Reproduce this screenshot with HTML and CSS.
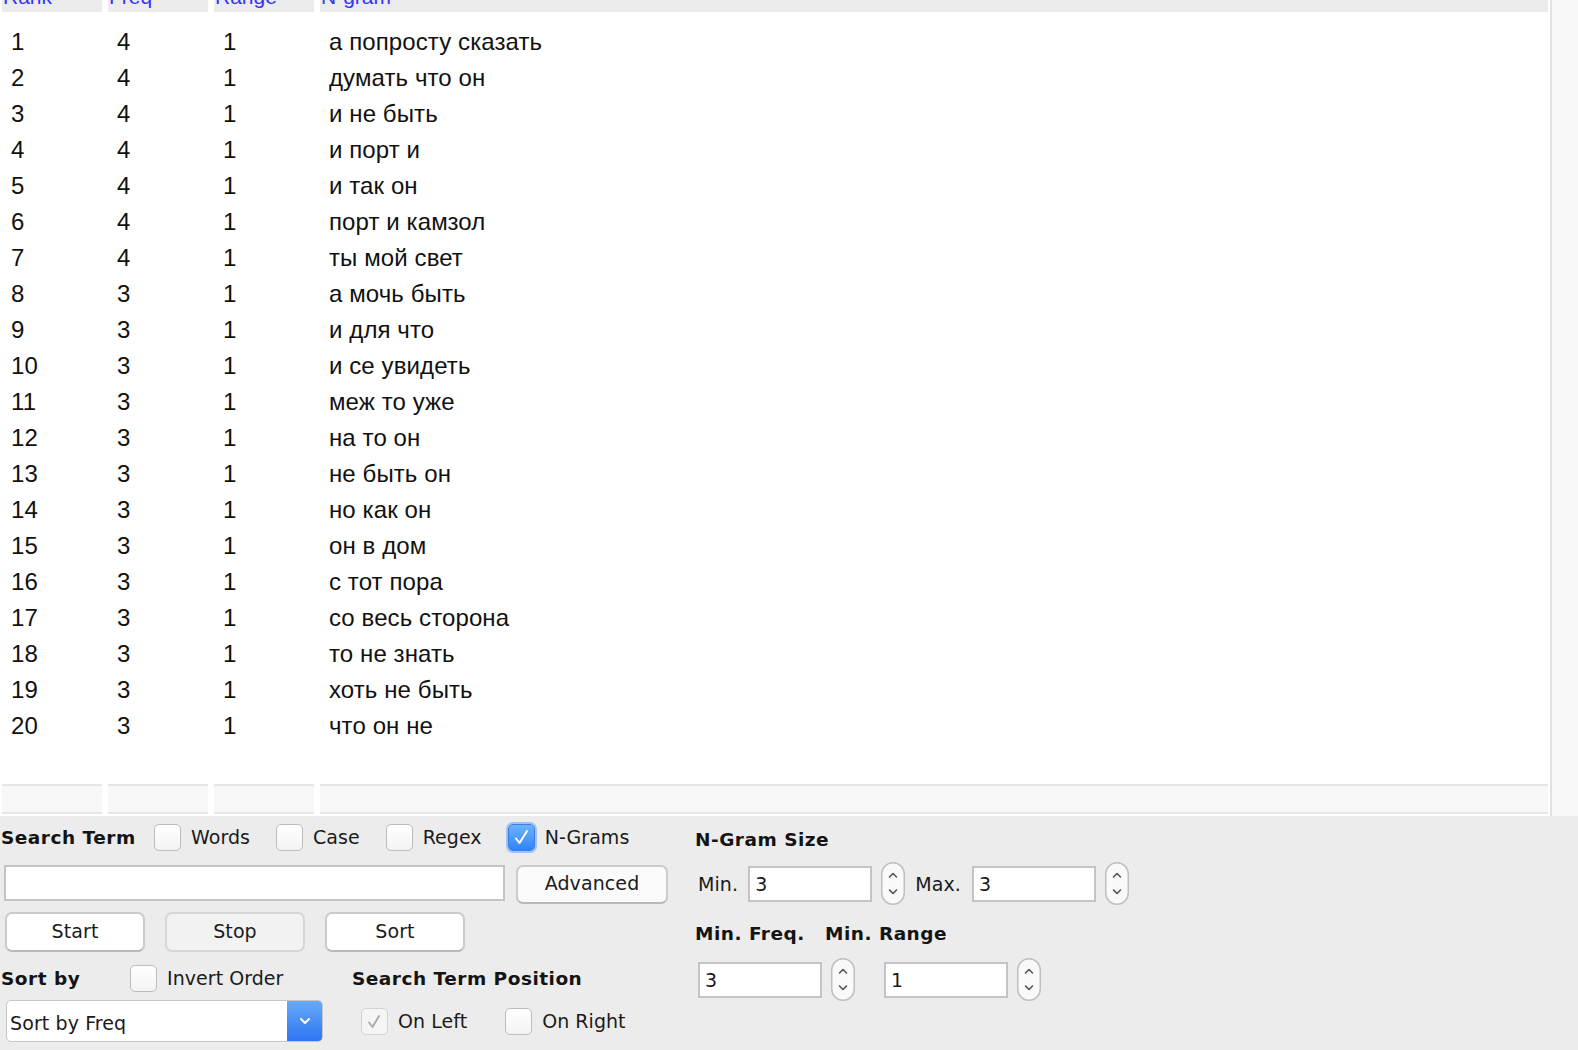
FILE: index.html
```html
<!DOCTYPE html>
<html>
<head>
<meta charset="utf-8">
<title>N-Gram</title>
<link rel="stylesheet" href="styles.css">
</head>
<body>
<div class="results">
  <div class="table">
    <div class="grid thead">
      <div class="th">Rank</div>
      <div class="th">Freq</div>
      <div class="th">Range</div>
      <div class="th">N-gram</div>
    </div>
    <div class="tbody">
      <div class="grid tr"><div class="td">1</div><div class="td">4</div><div class="td">1</div><div class="td">а попросту сказать</div></div>
      <div class="grid tr"><div class="td">2</div><div class="td">4</div><div class="td">1</div><div class="td">думать что он</div></div>
      <div class="grid tr"><div class="td">3</div><div class="td">4</div><div class="td">1</div><div class="td">и не быть</div></div>
      <div class="grid tr"><div class="td">4</div><div class="td">4</div><div class="td">1</div><div class="td">и порт и</div></div>
      <div class="grid tr"><div class="td">5</div><div class="td">4</div><div class="td">1</div><div class="td">и так он</div></div>
      <div class="grid tr"><div class="td">6</div><div class="td">4</div><div class="td">1</div><div class="td">порт и камзол</div></div>
      <div class="grid tr"><div class="td">7</div><div class="td">4</div><div class="td">1</div><div class="td">ты мой свет</div></div>
      <div class="grid tr"><div class="td">8</div><div class="td">3</div><div class="td">1</div><div class="td">а мочь быть</div></div>
      <div class="grid tr"><div class="td">9</div><div class="td">3</div><div class="td">1</div><div class="td">и для что</div></div>
      <div class="grid tr"><div class="td">10</div><div class="td">3</div><div class="td">1</div><div class="td">и се увидеть</div></div>
      <div class="grid tr"><div class="td">11</div><div class="td">3</div><div class="td">1</div><div class="td">меж то уже</div></div>
      <div class="grid tr"><div class="td">12</div><div class="td">3</div><div class="td">1</div><div class="td">на то он</div></div>
      <div class="grid tr"><div class="td">13</div><div class="td">3</div><div class="td">1</div><div class="td">не быть он</div></div>
      <div class="grid tr"><div class="td">14</div><div class="td">3</div><div class="td">1</div><div class="td">но как он</div></div>
      <div class="grid tr"><div class="td">15</div><div class="td">3</div><div class="td">1</div><div class="td">он в дом</div></div>
      <div class="grid tr"><div class="td">16</div><div class="td">3</div><div class="td">1</div><div class="td">с тот пора</div></div>
      <div class="grid tr"><div class="td">17</div><div class="td">3</div><div class="td">1</div><div class="td">со весь сторона</div></div>
      <div class="grid tr"><div class="td">18</div><div class="td">3</div><div class="td">1</div><div class="td">то не знать</div></div>
      <div class="grid tr"><div class="td">19</div><div class="td">3</div><div class="td">1</div><div class="td">хоть не быть</div></div>
      <div class="grid tr"><div class="td">20</div><div class="td">3</div><div class="td">1</div><div class="td">что он не</div></div>
    </div>
    <div class="grid tfoot">
      <div class="tf"></div><div class="tf"></div><div class="tf"></div><div class="tf"></div>
    </div>
  </div>
  <div class="scrollbar"></div>
</div>

<div class="panel">
  <div class="left">
    <div class="prow r1">
      <span class="blabel w-search">Search Term</span>
      <label class="cb"><span class="box"></span><span>Words</span></label>
      <label class="cb"><span class="box"></span><span>Case</span></label>
      <label class="cb"><span class="box"></span><span>Regex</span></label>
      <label class="cb"><span class="box checked"><svg width="25" height="25" viewBox="0 0 25 25"><path d="M7 13.5 L10.5 18 L18 6" fill="none" stroke="#fff" stroke-width="2" stroke-linecap="round" stroke-linejoin="round"/></svg></span><span>N-Grams</span></label>
    </div>
    <div class="prow r2">
      <div class="field wide"></div>
      <div class="btn adv">Advanced</div>
    </div>
    <div class="prow r3">
      <div class="btn act">Start</div>
      <div class="btn act disabled">Stop</div>
      <div class="btn act">Sort</div>
    </div>
    <div class="lower">
      <div class="colA">
        <div class="prow r4">
          <span class="blabel w-sortby">Sort by</span>
          <label class="cb"><span class="box"></span><span>Invert Order</span></label>
        </div>
        <div class="prow r5">
          <div class="select">
            <span class="select-text">Sort by Freq</span>
            <span class="select-arrow"><svg width="14" height="10" viewBox="0 0 14 10"><path d="M3 3 L7 7 L11 3" fill="none" stroke="#fff" stroke-width="2" stroke-linecap="round" stroke-linejoin="round"/></svg></span>
          </div>
        </div>
      </div>
      <div class="colB">
        <div class="prow r4">
          <span class="blabel">Search Term Position</span>
        </div>
        <div class="prow r5 pos">
          <label class="cb onleft"><span class="box dis"><svg width="25" height="25" viewBox="0 0 25 25"><path d="M7 13.5 L10.5 18 L17 7" fill="none" stroke="#a9a9a9" stroke-width="1.8" stroke-linecap="round" stroke-linejoin="round"/></svg></span><span>On Left</span></label>
          <label class="cb"><span class="box"></span><span>On Right</span></label>
        </div>
      </div>
    </div>
  </div>

  <div class="right">
    <div class="prow rA"><span class="blabel">N-Gram Size</span></div>
    <div class="prow rB">
      <span class="plabel">Min.</span>
      <div class="field num">3</div>
      <svg class="spin" width="24" height="43" viewBox="0 0 24 43"><rect x="0.75" y="0.75" width="22.5" height="41.5" rx="11.25" fill="#f9f9f9" stroke="#bfbfbf" stroke-width="1.5"/><path d="M8.5 15 L12 11.5 L15.5 15" fill="none" stroke="#555" stroke-width="1.6" stroke-linecap="round" stroke-linejoin="round"/><path d="M8.5 28 L12 31.5 L15.5 28" fill="none" stroke="#555" stroke-width="1.6" stroke-linecap="round" stroke-linejoin="round"/></svg>
      <span class="plabel max">Max.</span>
      <div class="field num">3</div>
      <svg class="spin" width="24" height="43" viewBox="0 0 24 43"><rect x="0.75" y="0.75" width="22.5" height="41.5" rx="11.25" fill="#f9f9f9" stroke="#bfbfbf" stroke-width="1.5"/><path d="M8.5 15 L12 11.5 L15.5 15" fill="none" stroke="#555" stroke-width="1.6" stroke-linecap="round" stroke-linejoin="round"/><path d="M8.5 28 L12 31.5 L15.5 28" fill="none" stroke="#555" stroke-width="1.6" stroke-linecap="round" stroke-linejoin="round"/></svg>
    </div>
    <div class="prow rC">
      <span class="blabel w-minfreq">Min. Freq.</span>
      <span class="blabel">Min. Range</span>
    </div>
    <div class="prow rD">
      <div class="field num">3</div>
      <svg class="spin" width="24" height="43" viewBox="0 0 24 43"><rect x="0.75" y="0.75" width="22.5" height="41.5" rx="11.25" fill="#f9f9f9" stroke="#bfbfbf" stroke-width="1.5"/><path d="M8.5 15 L12 11.5 L15.5 15" fill="none" stroke="#555" stroke-width="1.6" stroke-linecap="round" stroke-linejoin="round"/><path d="M8.5 28 L12 31.5 L15.5 28" fill="none" stroke="#555" stroke-width="1.6" stroke-linecap="round" stroke-linejoin="round"/></svg>
      <div class="field num range">1</div>
      <svg class="spin" width="24" height="43" viewBox="0 0 24 43"><rect x="0.75" y="0.75" width="22.5" height="41.5" rx="11.25" fill="#f9f9f9" stroke="#bfbfbf" stroke-width="1.5"/><path d="M8.5 15 L12 11.5 L15.5 15" fill="none" stroke="#555" stroke-width="1.6" stroke-linecap="round" stroke-linejoin="round"/><path d="M8.5 28 L12 31.5 L15.5 28" fill="none" stroke="#555" stroke-width="1.6" stroke-linecap="round" stroke-linejoin="round"/></svg>
    </div>
  </div>
</div>
</body>
</html>
```

FILE: styles.css
```css
* { box-sizing: border-box; }
html, body { margin: 0; padding: 0; }
body {
  width: 1578px;
  height: 1050px;
  overflow: hidden;
  background: #ececec;
  font-family: "DejaVu Sans", "Liberation Sans", sans-serif;
  color: #1a1a1a;
}

/* ---------- results table ---------- */
.results { display: flex; height: 816px; background: #fff; }
.table { width: 1550px; display: flex; flex-direction: column; overflow: hidden; }
.grid {
  display: grid;
  grid-template-columns: 100px 100px 100px 1fr;
  column-gap: 6px;
  padding: 0 2px;
}
.thead { margin-top: -18px; height: 30px; flex: none; }
.th {
  background: #ebebeb;
  color: #3636ef;
  font: 21px/30px "Liberation Sans", Arial, sans-serif;
  padding-left: 1px;
}
.tbody { padding-top: 12px; flex: 1; }
.tr {
  height: 36px;
  font: 24px/36px "Liberation Sans", Arial, sans-serif;
  color: #111;
}
.td { padding-left: 9px; white-space: nowrap; letter-spacing: 0.1px; }
.tfoot { height: 30px; margin-bottom: 2px; flex: none; }
.tf {
  background: #f8f8f8;
  border-top: 2px solid #e6e6e6;
  border-bottom: 2px solid #e6e6e6;
}
.scrollbar { width: 28px; background: #f8f8f8; border-left: 2px solid #e2e2e2; }

/* ---------- control panel ---------- */
.panel { height: 234px; display: flex; }
.left { width: 695px; display: flex; flex-direction: column; }
.right { display: flex; flex-direction: column; }
.prow { display: flex; align-items: center; }

.blabel { font-weight: bold; font-size: 18.5px; letter-spacing: 0.5px; color: #141414; white-space: nowrap; }
.plabel { font-size: 19px; letter-spacing: 0.1px; color: #1a1a1a; }
.w-search { width: 154px; padding-left: 1px; }
.w-sortby { width: 130px; padding-left: 1px; }
.w-minfreq { width: 130px; }

.cb { display: flex; align-items: center; gap: 10px; font-size: 19px; letter-spacing: 0.05px; margin-right: 26px; white-space: nowrap; }
.box {
  width: 27px; height: 27px;
  border: 1px solid #bcbcbc;
  border-radius: 5px;
  background: linear-gradient(#ffffff, #f3f3f3);
  display: flex; align-items: center; justify-content: center;
}
.box.checked {
  background: linear-gradient(#6db2fb, #2f84f5);
  border-color: #3a7ee2;
  box-shadow: 0 0 0 2px rgba(100, 160, 245, 0.55);
}
.box.dis { background: #f5f5f5; border-color: #d3d3d3; }

.r1 { margin-top: 7px; height: 28px; }
.r2 { margin-top: 14px; height: 39px; align-items: flex-start; }
.r3 { margin-top: 8px; height: 40px; gap: 20px; padding-left: 5px; }
.lower { display: flex; }
.colA { width: 352px; display: flex; flex-direction: column; }
.colB { display: flex; flex-direction: column; }
.r4 { margin-top: 12px; height: 28px; }
.r5 { margin-top: 8px; height: 42px; }
.pos { padding-left: 9px; }
.onleft { margin-right: 38px; }

.field {
  height: 36px;
  background: #fff;
  border: 2px solid #c4c4c4;
  font-size: 19px;
  line-height: 32px;
  padding-left: 5px;
  color: #1a1a1a;
}
.wide { width: 501px; margin-left: 4px; margin-top: 0; }

.btn {
  display: flex; align-items: center; justify-content: center;
  background: #fff;
  border: 2px solid #cbcbcb;
  border-bottom-color: #b9b9b9;
  border-radius: 7px;
  font-size: 19px;
  letter-spacing: 0.1px;
  color: #1a1a1a;
  padding-bottom: 3px;
}
.adv { width: 152px; height: 39px; margin-left: 11px; background: #fafafa; }
.act { width: 140px; height: 40px; }
.disabled { background: #f2f2f2; border-color: #d6d6d6; }

.select {
  margin-left: 6px;
  width: 317px; height: 42px;
  display: flex;
  background: #fff;
  border: 1px solid #c6c6c6;
  border-radius: 5px;
  overflow: hidden;
}
.select-text { flex: 1; font-size: 19px; letter-spacing: 0.1px; padding: 11px 0 0 3px; color: #1a1a1a; }
.select-arrow {
  width: 35px;
  background: linear-gradient(#69a9fb, #2c76f1);
  display: flex; align-items: center; justify-content: center;
}

.rA { margin-top: 9px; height: 28px; }
.rB { margin-top: 9px; height: 43px; padding-left: 3px; }
.rC { margin-top: 14px; height: 28px; }
.rD { margin-top: 11px; height: 43px; padding-left: 3px; }
.num { width: 124px; }
.rB .plabel { margin-right: 10px; }
.rB .num, .rD .num { margin-right: 9px; }
.rB .spin { margin-right: 10px; }
.rB .max { margin-right: 11px; }
.rD .spin { margin-right: 29px; }
```
